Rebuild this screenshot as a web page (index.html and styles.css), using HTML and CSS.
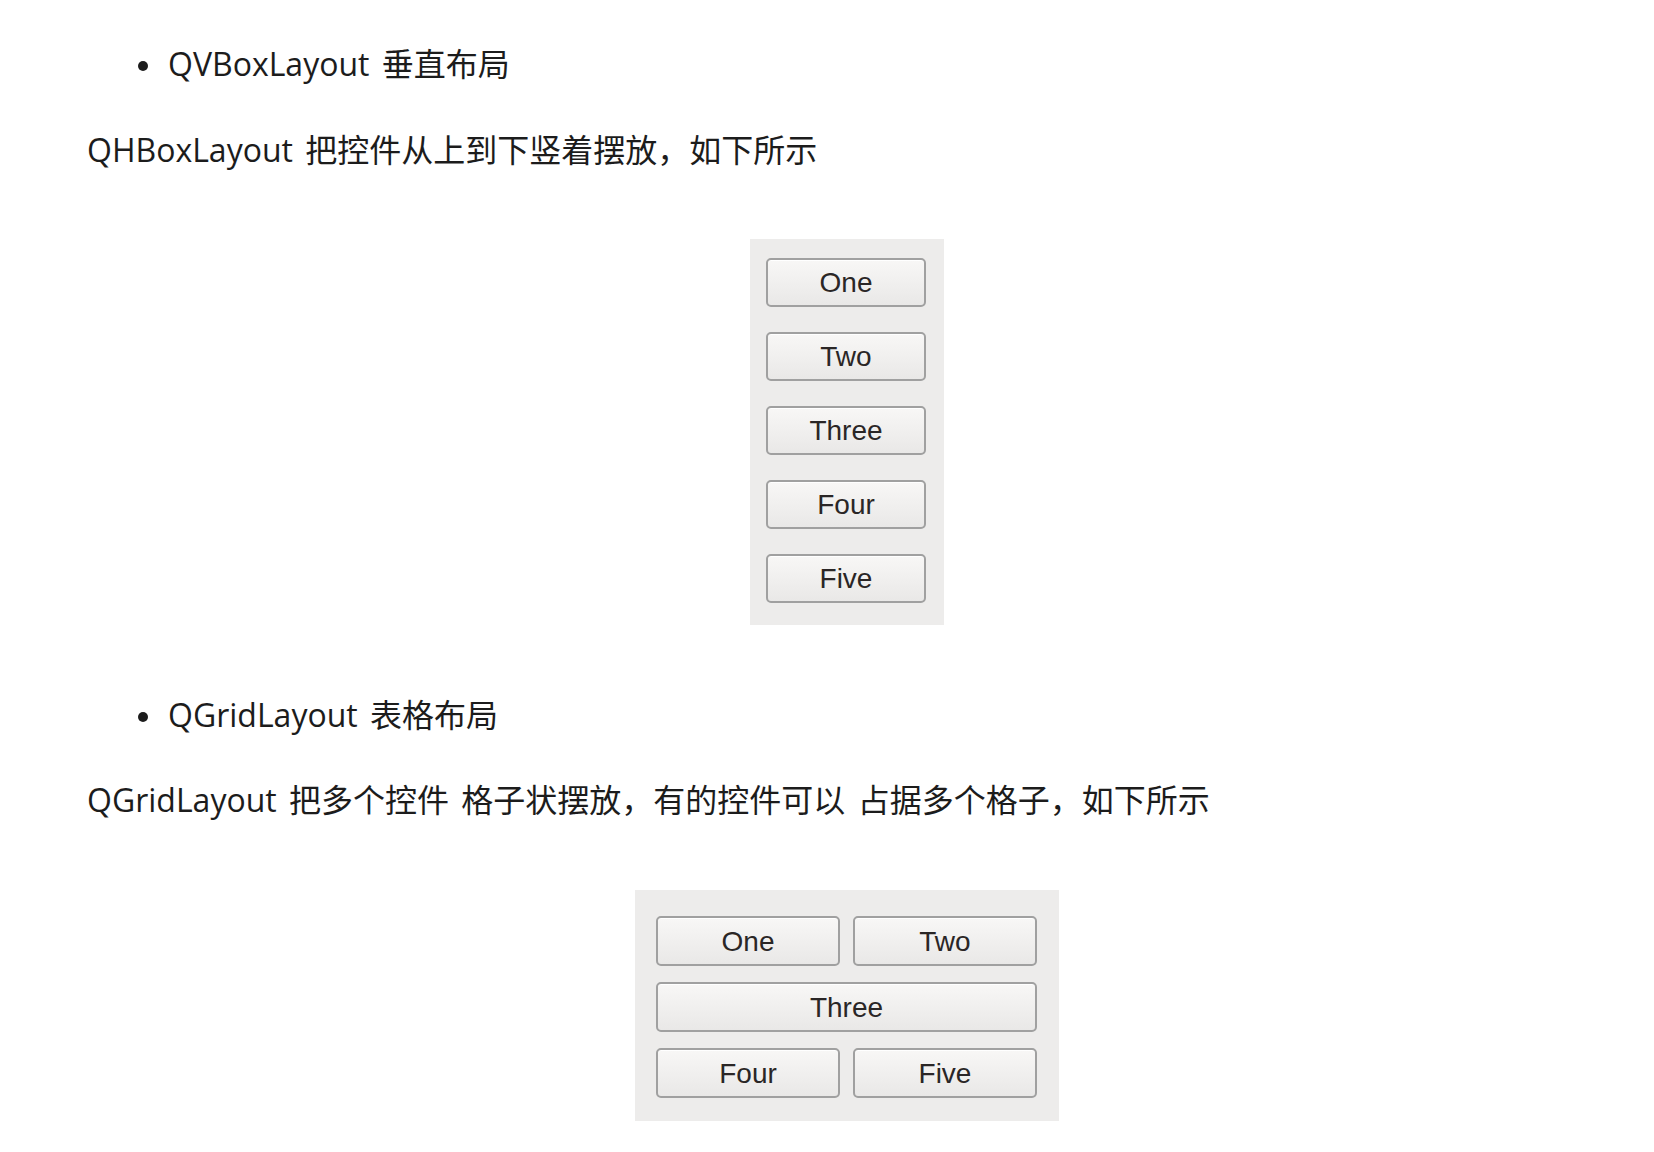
FILE: index.html
```html
<!DOCTYPE html>
<html lang="zh-CN">
<head>
<meta charset="utf-8">
<title>Qt 布局</title>
<link rel="stylesheet" href="styles.css">
</head>
<body>
<div class="doc">
  <ul class="bullets">
    <li class="bullet"><span class="dot"></span><span>QVBoxLayout 垂直布局</span></li>
  </ul>
  <p class="para">QHBoxLayout 把控件从上到下竖着摆放，如下所示</p>
  <div class="figure">
    <div class="panel vbox">
      <div class="qbtn">One</div>
      <div class="qbtn">Two</div>
      <div class="qbtn">Three</div>
      <div class="qbtn">Four</div>
      <div class="qbtn">Five</div>
    </div>
  </div>
  <ul class="bullets second">
    <li class="bullet"><span class="dot"></span><span>QGridLayout 表格布局</span></li>
  </ul>
  <p class="para para2">QGridLayout 把多个控件 格子状摆放，有的控件可以 占据多个格子，如下所示</p>
  <div class="figure grid-fig">
    <div class="panel grid">
      <div class="qbtn">One</div>
      <div class="qbtn">Two</div>
      <div class="qbtn span2">Three</div>
      <div class="qbtn">Four</div>
      <div class="qbtn">Five</div>
    </div>
  </div>
</div>
</body>
</html>
```
FILE: styles.css
```css
html, body {
  margin: 0;
  padding: 0;
  background: #ffffff;
}
.doc {
  width: 1520px;
  padding: 40px 0 0 87px;
  font-family: "Open Sans", "Noto Sans CJK SC", sans-serif;
  font-size: 32px;
  line-height: 48px;
  word-spacing: 4px;
  color: #1c1c1c;
}
.bullets {
  list-style: none;
  margin: 0;
  padding: 0;
}
.bullets.second {
  margin-top: 66px;
}
.bullet {
  display: flex;
  align-items: center;
  padding-left: 51px;
  gap: 20px;
}
.dot {
  width: 10px;
  height: 10px;
  border-radius: 50%;
  background: #1c1c1c;
  margin-top: 3px;
  flex: none;
}
.para {
  margin: 38px 0 0 0;
}
.para2 {
  margin-top: 37px;
}
.figure {
  display: flex;
  justify-content: center;
  margin-top: 65px;
}
.grid-fig {
  margin-top: 66px;
}
.panel {
  background: #edeceb;
  box-sizing: border-box;
}
.vbox {
  width: 194px;
  height: 386px;
  padding: 19px 18px 0 16px;
  display: flex;
  flex-direction: column;
  gap: 25px;
}
.grid {
  width: 424px;
  height: 231px;
  padding: 26px 22px 0 21px;
  display: grid;
  grid-template-columns: 184px 184px;
  grid-auto-rows: 50px;
  column-gap: 13px;
  row-gap: 16px;
  align-content: start;
}
.span2 {
  grid-column: span 2;
}
.qbtn {
  box-sizing: border-box;
  height: 49px;
  border: 2px solid #a0a0a0;
  border-radius: 5px;
  background: linear-gradient(#f8f7f6, #e9e8e7);
  box-shadow: inset 0 1px 0 #ffffff;
  display: flex;
  align-items: center;
  justify-content: center;
  font-family: "Liberation Sans", Arial, sans-serif;
  font-size: 28px;
  line-height: 1;
  word-spacing: 0;
  color: #2a2626;
  padding-top: 1px;
}
.grid .qbtn {
  height: 50px;
}
```
